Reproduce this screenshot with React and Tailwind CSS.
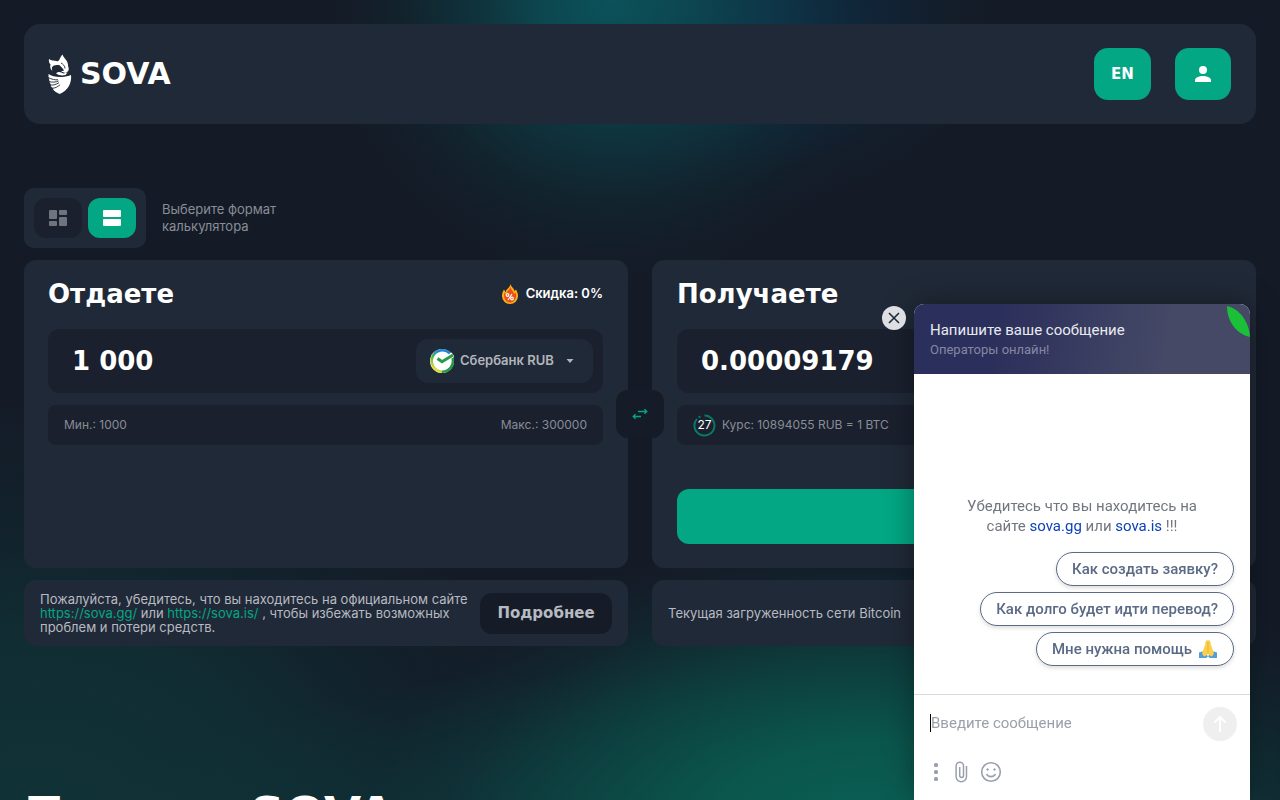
import React from "react";

const display = "font-['DejaVu_Sans',sans-serif] font-bold";
const panel = "rounded-xl bg-[#202937]";
const inset = "bg-[#1a202d]";

function OwlMark() {
  return (
    <svg className="h-10 w-6" viewBox="0 0 24 40" fill="#fff" aria-hidden="true">
      <path d="M1 5C3 7 6 6.500 9.500 7.200C11.500 7 12 3 14.500 .5C15.500 4 19.500 6 20 10.500C19.500 12 21.500 14 20.500 16.500C19.500 18.500 18 18 17.500 19L13 17.500L16 16.500C15 14 13 13.500 12 11.500C9 10.500 5 11 4 13.500C3.600 14.800 4 16 4.500 17C2.500 15.500 1.700 13 2.500 10.500C1 9 .6 7 1 5Z" />
      <path d="M8 19.500C11 16.500 13 18.500 15.500 19.500L19.500 18.500L17.500 21C14.500 22 10.500 21.500 8 19.500Z" />
      <path d="M.5 20C5 23 14 24.500 23 21C24 29 20 36.500 11.700 40C8 38 5.500 37 4.500 34L3 32.500L2.500 30L1.500 28L1.200 25.500L.5 23.500Z" />
      <g fill="none" stroke="#202937" strokeWidth=".9">
        <path d="M0 23.500c4 2 7 2.500 10 2.300M.5 27.500c4 1 7 .8 10-.5M2 31c4 .3 6-.5 9-2.300M3.500 34.300c4 0 6-1.500 8.500-3.500" />
        <path d="M13 9c2 1 4 3 4 5.500" />
      </g>
    </svg>
  );
}

function PersonIcon() {
  return (
    <svg className="size-6" viewBox="0 0 24 24" fill="currentColor" aria-hidden="true">
      <path d="M12 12a4 4 0 1 0 0-8 4 4 0 0 0 0 8Zm0 2c-2.670 0-8 1.340-8 4v2h16v-2c0-2.660-5.330-4-8-4Z" />
    </svg>
  );
}

function FlameIcon() {
  return (
    <svg className="h-5 w-4" viewBox="0 0 16 20" aria-hidden="true">
      <path d="M8.500 0c.5 3 3.500 4 4 7l1.500-1.500c1 2 2 4 2 6.500a8 8 0 0 1-16 0C0 9 1 7 2 5.500L3.500 8C4 5 8 4 8.500 0Z" fill="#fbb117" />
      <path d="M8.500 3c.5 3 3 4 3.500 7l1.500-1.500c2 5-1 10-5.500 10S1 14 2.500 8.500L4 10c.5-3 4-4 4.500-7Z" fill="#f04e16" />
      <g fill="none" stroke="#fff" strokeWidth="1.200">
        <circle cx="5.500" cy="11" r="1.300" />
        <circle cx="10" cy="14.500" r="1.300" />
        <path d="m10 10-4 6" />
      </g>
    </svg>
  );
}

function SberIcon() {
  return (
    <svg className="size-6 shrink-0" viewBox="0 0 24 24" fill="none" aria-hidden="true">
      <defs>
        <linearGradient id="sber" x1="4" y1="20" x2="16" y2="3" gradientUnits="userSpaceOnUse">
          <stop stopColor="#e6df3a" />
          <stop offset=".45" stopColor="#50b649" />
          <stop offset=".8" stopColor="#2389cf" />
        </linearGradient>
      </defs>
      <circle cx="12" cy="12" r="12" fill="#fff" />
      <path d="M20 4.500A10.700 10.700 0 1 0 12 22.700" stroke="url(#sber)" strokeWidth="2.600" />
      <path d="M12 22.700A10.700 10.700 0 0 0 22.500 9" stroke="#239a45" strokeWidth="2.600" />
      <path d="M8 9.500 12 12.500 23 5.500" stroke="#fff" strokeWidth="5" />
      <path d="M7.500 9.500 12 12.700 23 6" stroke="#279b47" strokeWidth="3" />
    </svg>
  );
}

function Header() {
  return (
    <header className="flex items-center justify-between rounded-2xl bg-[#202937] p-6 pr-[25px]">
      <a href="#" className="flex items-center gap-2 text-white" aria-label="SOVA">
        <OwlMark />
        <span className={`${display} text-[30px] leading-8`}>SOVA</span>
      </a>
      <div className="flex gap-6 text-white">
        <button className={`${display} h-[52px] w-[57px] rounded-[14px] bg-[#03a783] text-[15px]`}>EN</button>
        <button aria-label="Профиль" className="flex h-[52px] w-14 items-center justify-center rounded-[14px] bg-[#03a783]">
          <PersonIcon />
        </button>
      </div>
    </header>
  );
}

function FormatPicker() {
  return (
    <div className="mt-16 flex items-center gap-4">
      <div className="flex gap-1.5 rounded-[10px] bg-[#202937] p-2.5">
        <button aria-label="Плитка" className="flex h-10 w-12 items-center justify-center rounded-xl bg-[#1a202d] text-[#6f747f]">
          <svg className="size-[18px]" viewBox="0 0 18 18" fill="currentColor">
            <rect x="0" y="1" width="8" height="9" rx="1" />
            <rect x="10" y="1" width="8" height="5" rx="1" />
            <rect x="0" y="12" width="8" height="5" rx="1" />
            <rect x="10" y="8" width="8" height="9" rx="1" />
          </svg>
        </button>
        <button aria-label="Строки" className="flex h-10 w-12 items-center justify-center rounded-xl bg-[#03a783] text-white">
          <svg className="size-[18px]" viewBox="0 0 18 18" fill="currentColor">
            <rect x="0" y="1" width="18" height="7" rx="1" />
            <rect x="0" y="10" width="18" height="7" rx="1" />
          </svg>
        </button>
      </div>
      <p className="w-32 text-[13px] leading-[17px] text-[#898d96]">Выберите формат калькулятора</p>
    </div>
  );
}

function GivePanel() {
  return (
    <section className={`${panel} h-[308px] px-6 pr-[25px] pt-[18px]`}>
      <div className="flex items-center justify-between text-white">
        <h2 className={`${display} text-[26px] leading-8`}>Отдаете</h2>
        <span className="flex items-center gap-2 text-[13px] font-semibold">
          <FlameIcon />
          Скидка: 0%
        </span>
      </div>
      <div className={`${inset} mt-[19px] flex h-16 items-center rounded-xl pl-6 pr-2.5`}>
        <input aria-label="Отдаете" defaultValue="1 000" className={`${display} w-0 min-w-0 flex-1 bg-transparent text-[26px] text-white outline-none`} />
        <button className="flex h-11 w-[177px] items-center rounded-xl bg-[#202937] pl-3.5 text-[13px] font-semibold text-[#b2b5bc]">
          <SberIcon />
          <span className="ml-1.5 whitespace-nowrap">Сбербанк RUB</span>
          <svg className="ml-3 h-1 w-2" viewBox="0 0 8 4" fill="currentColor" aria-hidden="true"><path d="M.5 0h7L4 4Z" /></svg>
        </button>
      </div>
      <div className={`${inset} mt-3 flex h-10 items-center justify-between rounded-lg px-4 text-[12px] text-[#898d96]`}>
        <span>Мин.: 1000</span>
        <span>Макс.: 300000</span>
      </div>
    </section>
  );
}

function GetPanel() {
  return (
    <section className={`${panel} h-[308px] px-[25px] pt-[18px]`}>
      <h2 className={`${display} text-[26px] leading-8 text-white`}>Получаете</h2>
      <div className={`${inset} mt-[19px] flex h-16 items-center rounded-xl px-6`}>
        <input aria-label="Получаете" defaultValue="0.00009179" className={`${display} w-full bg-transparent text-[26px] text-white outline-none`} />
      </div>
      <div className={`${inset} mt-3 flex h-10 items-center gap-1.5 rounded-lg px-4 text-[12px] text-[#898d96]`}>
        <span className="grid size-[23px] place-items-center text-white">
          <svg className="col-start-1 row-start-1 size-[23px]" viewBox="0 0 23 23" fill="none" aria-hidden="true">
            <path d="M11.500 1.500a10 10 0 1 1-7.500 3.300" stroke="#0b7867" strokeWidth="2" />
            <path d="M5.500 3.500 7.500 2.300" stroke="#0b7867" strokeWidth="2" />
          </svg>
          <span className="col-start-1 row-start-1 text-[12px]">27</span>
        </span>
        <span>Курс: 10894055 RUB = 1 BTC</span>
      </div>
      <button aria-label="Обменять" className="mt-11 block h-[55px] w-full rounded-xl bg-[#03a783]" />
    </section>
  );
}

function Calculator() {
  return (
    <div className="relative mt-3 grid grid-cols-2 gap-6">
      <GivePanel />
      <GetPanel />
      <button aria-label="Поменять местами" className="absolute left-1/2 top-[130px] flex size-12 -translate-x-1/2 items-center justify-center rounded-xl bg-[#151c28] text-[#03a783]">
        <svg className="size-4" viewBox="0 0 16 16" fill="none" stroke="currentColor" strokeWidth="1.400" aria-hidden="true">
          <path d="M6 5.500h8.500M12.500 3.300 14.700 5.500 12.500 7.700M9 10.500H1.500M3.500 8.300 1.300 10.500 3.500 12.700" />
        </svg>
      </button>
    </div>
  );
}

function Notices() {
  return (
    <div className="mt-3 grid grid-cols-2 gap-6 text-[13px] leading-[14px] text-[#b7bac1]">
      <section className={`${panel} flex h-[66px] items-center justify-between px-4`}>
        <p className="whitespace-nowrap">
          Пожалуйста, убедитесь, что вы находитесь на официальном сайте
          <br />
          <a href="https://sova.gg/" className="text-[#03a783]">https://sova.gg/</a> или{" "}
          <a href="https://sova.is/" className="text-[#03a783]">https://sova.is/</a> , чтобы избежать возможных
          <br />
          проблем и потери средств.
        </p>
        <button className={`${display} h-[41px] w-[132px] shrink-0 rounded-xl bg-[#151c28] text-[15px]`}>Подробнее</button>
      </section>
      <section className={`${panel} flex h-[66px] items-center px-4`}>
        <p>Текущая загруженность сети Bitcoin</p>
      </section>
    </div>
  );
}

function Composer() {
  return (
    <div className="border-t border-[#d7dade] px-4 pt-3">
      <div className="-mr-[3px] flex items-center justify-between">
        <div className="flex items-center pb-0.5">
          <span className="h-[18px] w-px bg-black" />
          <input aria-label="Введите сообщение" placeholder="Введите сообщение" className="w-56 text-[15px] leading-5 outline-none placeholder:text-[#9ca0ab]" />
        </div>
        <button aria-label="Отправить" className="flex size-[34px] items-center justify-center rounded-full bg-[#efefef] text-white">
          <svg className="size-[18px]" viewBox="0 0 18 18" fill="none" stroke="currentColor" strokeWidth="2" aria-hidden="true"><path d="M9 17V2M3.500 7.500 9 2l5.500 5.500" /></svg>
        </button>
      </div>
      <div className="mt-5 flex items-center gap-3 text-[#9a9fac]">
        <button aria-label="Меню" className="w-3">
          <svg className="h-5 w-3" viewBox="0 0 12 20" fill="currentColor"><rect x="4" y="1" width="4" height="4" rx="1.500" /><rect x="4" y="8" width="4" height="4" rx="1.500" /><rect x="4" y="15" width="4" height="4" rx="1.500" /></svg>
        </button>
        <button aria-label="Прикрепить файл">
          <svg className="h-[22px] w-[14px]" viewBox="0 0 14 22" fill="none" stroke="currentColor" strokeWidth="1.500"><path d="M12.500 5v10.500a5.200 5.200 0 0 1-10.400 0V5a3.700 3.700 0 0 1 7.400 0v9.500a1.900 1.900 0 0 1-3.800 0V6" /></svg>
        </button>
        <button aria-label="Эмодзи">
          <svg className="size-[22px]" viewBox="0 0 22 22" fill="none" stroke="currentColor" strokeWidth="1.600"><circle cx="11" cy="11" r="9.300" /><path d="M6.500 13c1.500 3.500 7.500 3.500 9 0" /><circle cx="7.500" cy="8.500" r=".8" fill="currentColor" strokeWidth="1" /><circle cx="14.500" cy="8.500" r=".8" fill="currentColor" strokeWidth="1" /></svg>
        </button>
      </div>
    </div>
  );
}

function ChatWidget() {
  const reply = "h-[34px] rounded-full border border-[#5b6a85] bg-white px-[15px] text-[15px] font-medium leading-5 shadow-[0_2px_4px_rgba(0,0,0,0.14)]";
  return (
    <aside className="fixed bottom-0 right-[30px] w-[336px] font-['Roboto',sans-serif]">
      <button aria-label="Закрыть чат" className="absolute -left-8 top-0.5 flex size-6 items-center justify-center rounded-full bg-[#dedfe2] text-[#202937]">
        <svg className="size-3" viewBox="0 0 12 12" fill="none" stroke="currentColor" strokeWidth="1.600" aria-hidden="true"><path d="m1 1 10 10M11 1 1 11" /></svg>
      </button>
      <div className="flex h-[496px] flex-col overflow-hidden rounded-t-[10px] bg-white shadow-[0_0_30px_rgba(0,0,0,0.35)]">
        <header className="flex h-[70px] shrink-0 justify-between bg-[linear-gradient(100deg,#2b2f5b_25%,#454966_75%)] pl-4">
          <div className="pt-4">
            <h2 className="text-[15px] leading-5 text-[#e9eaf0]">Напишите ваше сообщение</h2>
            <p className="text-[13px] leading-5 text-[#8588a1]">Операторы онлайн!</p>
          </div>
          <svg className="h-[34px] w-6" viewBox="0 0 24 34" aria-hidden="true"><path d="M1 2C1 17 10 30 24 33C23 18 14 5 1 2Z" fill="#1bc039" /></svg>
        </header>
        <div className="flex flex-1 flex-col justify-end px-4 pb-7">
          <p className="mb-4 text-center text-[15px] leading-5 text-[#72777f]">
            Убедитесь что вы находитесь на<br />
            сайте <a href="https://sova.gg" className="text-[#0c41b8]">sova.gg</a> или <a href="https://sova.is" className="text-[#0c41b8]">sova.is</a> !!!
          </p>
          <div className="flex flex-col items-end gap-1.5 text-[#5b6a85]">
            <button className={reply}>Как создать заявку?</button>
            <button className={reply}>Как долго будет идти перевод?</button>
            <button className={`${reply} flex items-center gap-1.5`}>
              Мне нужна помощь
              <svg className="size-5" viewBox="0 0 20 20" aria-hidden="true">
                <path d="M1 13.500 6 12l4 5.500-2 1.500H1ZM19 13.500l-5-1.500-4 5.500 2 1.500h7Z" fill="#4f9ed6" />
                <path d="M9.900 1.500C8 .5 7.200 3 7.200 5.500L4.800 12c-1.300 2.500-.3 4.500 1.700 5.500l3.500-2.300 3.500 2.300c2-1 3-3 1.700-5.500l-2.400-6.500c0-2.500-.8-5-2.900-4Z" fill="#fcd04b" />
                <path d="M10 3v11.500" stroke="#e0a72d" strokeWidth=".7" />
              </svg>
            </button>
          </div>
        </div>
        <div className="h-[106px] shrink-0"><Composer /></div>
      </div>
    </aside>
  );
}

export default function App() {
  return (
    <div className="min-h-screen bg-[#141b27] bg-[radial-gradient(ellipse_290px_290px_at_610px_0px,#0b525a_0%,#0c4a52e6_25%,#0d3e46b3_45%,#0e303866_70%,#11232e26_88%,transparent_100%),radial-gradient(ellipse_260px_190px_at_740px_20px,#0d3658_0%,#0e2d4899_45%,#10233433_80%,transparent_100%),radial-gradient(ellipse_560px_300px_at_880px_830px,#0a6055_0%,#0a594fee_30%,#0b4b47bb_55%,#0e353a66_78%,#10262f22_92%,transparent_100%),radial-gradient(ellipse_520px_170px_at_620px_840px,#0d474599_0%,#0e363b66_60%,transparent_100%),radial-gradient(ellipse_520px_440px_at_40px_840px,#103337_0%,#103035dd_45%,#10283088_72%,transparent_100%)] bg-no-repeat font-['Inter',sans-serif]">
      <main className="px-6 pt-6">
        <Header />
        <FormatPicker />
        <Calculator />
        <Notices />
        <h1 className={`${display} mt-[136px] whitespace-nowrap text-[48px] leading-[64px] text-white`}>Почему SOVA</h1>
      </main>
      <ChatWidget />
    </div>
  );
}
